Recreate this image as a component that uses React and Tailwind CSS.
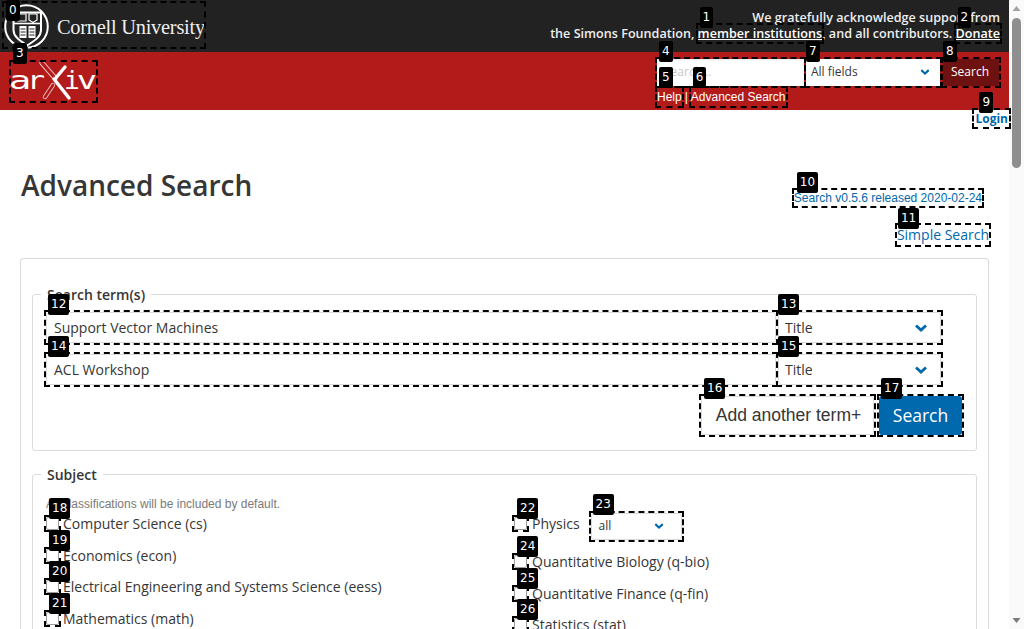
import React from "react";

const open = "font-['Open_Sans',sans-serif]";
const lib = "font-['Liberation_Sans',sans-serif]";
const mark = "outline-2 outline-dashed outline-black";

function Badge({ n, x = 2, y = -18 }) {
  return (
    <span
      className="absolute z-10 h-[21px] px-[3px] rounded-[2px] bg-black text-white text-[12px] leading-[21px] font-['DejaVu_Sans',sans-serif] font-normal no-underline whitespace-nowrap"
      style={{ left: x, top: y }}
    >
      {n}
    </span>
  );
}

function Chevron({ className = "" }) {
  return (
    <svg viewBox="0 0 12 8" className={"w-[12px] h-[8px] " + className} fill="none" stroke="#0068ac" strokeWidth="2.8">
      <path d="M1 1.5 L6 6 L11 1.5" />
    </svg>
  );
}

function CornellLogo() {
  return (
    <div className="flex items-center h-[44px] w-[200px]">
      <svg viewBox="0 0 45 45" className="w-[45px] h-[45px] shrink-0 mt-[2px]" fill="none" stroke="#fff">
        <circle cx="22.5" cy="22.5" r="21.3" strokeWidth="2" />
        <path d="M9.5 8.5 H37 V26 C37 33 30 37 23.2 41.5 C16.5 37 9.5 33 9.5 26 Z" strokeWidth="2" fill="#222" />
        <path d="M14 10 h8 v7 h-8 z M25 10 h8 v6 l-4 2.5 l-4 -2.5 z" strokeWidth="1.2" />
        <path d="M10 19.5 H37" strokeWidth="1.6" />
        <path d="M15.5 22 H22.5 V34 H15.5 Z M24.5 22 H31.5 V34 H24.5 Z" fill="#fff" stroke="none" />
        <path d="M16.5 25 h5 M16.5 28 h5 M16.5 31 h5 M25.5 25 h5 M25.5 28 h5 M25.5 31 h5" stroke="#222" strokeWidth="1" />
      </svg>
      <span className="ml-[8px] mt-[4px] text-[#eeeeee] text-[20.4px] tracking-[-0.25px] font-['Liberation_Serif',serif] whitespace-nowrap">
        Cornell University
      </span>
    </div>
  );
}

function ArxivLetter({ c, left, scale }) {
  return (
    <span
      className="absolute top-[1px] w-[20px] text-center text-white text-[25px] leading-[36px] font-normal font-['DejaVu_Sans_Mono',monospace]"
      style={{ left, transform: `scaleX(${scale})` }}
    >
      {c}
    </span>
  );
}

function ArxivLogo() {
  return (
    <div className="relative w-[85px] h-[39px]">
      <ArxivLetter c="a" left={-1} scale={1.5} />
      <ArxivLetter c="r" left={15} scale={1.2} />
      <ArxivLetter c="i" left={51} scale={1.05} />
      <ArxivLetter c="v" left={66} scale={1.35} />
      <svg viewBox="0 0 85 39" className="absolute left-0 top-0 w-[85px] h-[39px]" fill="none">
        <path d="M31 1 L44 16" stroke="#f4d0d0" strokeWidth="5" strokeLinecap="round" />
        <path d="M31 1 L44 16" stroke="#b31b1b" strokeWidth="3.4" strokeLinecap="round" />
        <path d="M34 35 L42 23" stroke="#f4d0d0" strokeWidth="4.4" strokeLinecap="round" />
        <path d="M34 35 L42 23" stroke="#b31b1b" strokeWidth="2.8" strokeLinecap="round" />
        <path d="M43 17 L58 36" stroke="#fff" strokeWidth="3.4" strokeLinecap="round" />
        <path d="M54 5 L44 17" stroke="#fff" strokeWidth="3.4" strokeLinecap="round" />
      </svg>
    </div>
  );
}

function CheckRow({ n, label, ml = "ml-[4px]", children, h = "h-[31.5px]" }) {
  return (
    <div className={"flex items-center " + h}>
      <span className={"relative block w-[13px] h-[13px] shrink-0 " + mark}>
        <Badge n={n} x={3} y={-19} />
        <span className="block w-full h-full rounded-[2px] bg-white border border-[#9a9a9a]" />
      </span>
      <span className={"text-[14px] text-[#363636] whitespace-nowrap " + ml}>{label}</span>
      {children}
    </div>
  );
}

function TermRow({ n1, n2, text }) {
  return (
    <div className="flex gap-[2px] h-[31px]">
      <div className={"relative w-[730px] h-[31px] " + mark}>
        <Badge n={n1} x={2} y={-18} />
        <div className="w-full h-full flex items-center pl-[7px] bg-white border border-[#dbdbdb] rounded-[3px] text-[14px] text-[#363636]">
          {text}
        </div>
      </div>
      <div className={"relative w-[163px] h-[31px] " + mark}>
        <Badge n={n2} x={0} y={-18} />
        <div className="w-full h-full flex items-center pl-[6px] pr-[13px] justify-between bg-white border border-[#dbdbdb] rounded-[3px] text-[14px] text-[#363636]">
          <span>Title</span>
          <Chevron />
        </div>
      </div>
    </div>
  );
}

export default function App() {
  return (
    <div className={"flex w-full h-[629px] overflow-hidden bg-white text-[#363636] " + open}>
      <div className="w-[1009px] h-[629px] shrink-0 flex flex-col">
        <header className="h-[52px] shrink-0 bg-[#222222] flex justify-between pl-[4px] pr-[9px]">
          <div className={"relative self-start mt-[3px] " + mark}>
            <Badge n={0} x={2} y={-3} />
            <CornellLogo />
          </div>
          <div className="pt-[10px] text-right text-[12.6px] leading-[16px] font-semibold text-[#eeeeee] whitespace-nowrap">
            <div>We gratefully acknowledge support from</div>
            <div>
              the Simons Foundation,{" "}
              <a className={"relative underline text-white " + mark}>
                <Badge n={1} x={2} y={-18} />
                member institutions
              </a>
              , and all contributors.{" "}
              <a className={"relative underline text-white " + mark}>
                <Badge n={2} x={2} y={-18} />
                Donate
              </a>
            </div>
          </div>
        </header>

        <div className="h-[58px] shrink-0 bg-[#b31b1b] flex justify-between pl-[11px] pr-[10px]">
          <div className={"relative self-start mt-[10px] " + mark}>
            <Badge n={3} x={2} y={-19} />
            <ArxivLogo />
          </div>
          <div className="w-[342px] pt-[7px] flex flex-col">
            <div className="flex">
              <div className={"relative w-[147px] h-[27px] flex items-center pl-[7px] pb-[1px] bg-white text-[12px] text-[#c8c8c8] shadow-[inset_0_1px_2px_rgba(10,10,10,0.1)] " + mark}>
                <Badge n={4} x={2} y={-18} />
                Search...
              </div>
              <div className={"relative ml-[2px] w-[134px] h-[27px] flex items-center justify-between pl-[5px] pr-[9px] pb-[1px] bg-white text-[12px] text-[#363636] " + mark}>
                <Badge n={7} x={0} y={-18} />
                <span>All fields</span>
                <Chevron className="scale-75" />
              </div>
              <div className={"relative ml-[3px] w-[56px] h-[27px] " + mark}>
                <Badge n={8} x={0} y={-18} />
                <div className="w-full h-full flex items-center justify-center pb-[1px] pr-[2px] bg-[#6e1111] text-white text-[12px] rounded-[2px]">
                  Search
                </div>
              </div>
            </div>
            <div className={"mt-[2px] flex items-center text-[12px] leading-[18px] text-white " + lib}>
              <a className={"relative " + mark}>
                <Badge n={5} x={2} y={-21} />
                Help
              </a>
              <span className="mx-[3px]">|</span>
              <a className={"relative " + mark}>
                <Badge n={6} x={2} y={-21} />
                Advanced Search
              </a>
            </div>
          </div>
        </div>

        <div className="flex justify-end h-[17px] shrink-0">
          <a className={"relative self-end text-[12px] leading-[17px] font-bold text-[#0068ac] px-[1px] " + mark}>
            <Badge n={9} x={5} y={-18} />
            Login
          </a>
        </div>

        <main className="flex-1 flex flex-col px-[20px] min-h-0">
          <div className="h-[131px] shrink-0 flex justify-between">
            <h1 className="mt-[40px] ml-[1px] text-[28px] leading-[36px] font-semibold text-[#363636]">Advanced Search</h1>
            <div className="flex flex-col items-end mt-[63px]">
              <a className={"relative mr-[7px] text-[12px] leading-[16px] text-[#0068ac] " + lib + " " + mark}>
                <Badge n={10} x={3} y={-18} />
                Search v0.5.6 released 2020-02-24
              </a>
              <a className={"relative mt-[19px] text-[14px] leading-[20px] text-[#0068ac] " + mark}>
                <Badge n={11} x={1} y={-17} />
                Simple Search
              </a>
            </div>
          </div>

          <section className="flex-1 min-h-0 overflow-hidden border border-b-0 border-[#dbdbdb] rounded-t-[4px] px-[11px] pt-[35px]">
            <fieldset className="relative h-[157px] border border-[#dbdbdb] rounded-[3px] px-[13px] pt-[17px]">
              <legend className="absolute left-[8px] top-[-10px] bg-white px-[6px] text-[14px] leading-[20px] font-semibold whitespace-nowrap">
                Search term(s)
              </legend>
              <div className="flex flex-col gap-[11px]">
                <TermRow n1={12} n2={13} text="Support Vector Machines" />
                <TermRow n1={14} n2={15} text="ACL Workshop" />
              </div>
              <div className="flex justify-end mt-[11px] pr-[1px]">
                <div className={"relative w-[173px] h-[39px] " + mark}>
                  <Badge n={16} x={3} y={-18} />
                  <div className={"w-full h-full flex items-center justify-center pl-[2px] bg-white border border-[#dbdbdb] rounded-[3px] text-[17.5px] " + lib}>
                    Add another term+
                  </div>
                </div>
                <div className={"relative ml-[5px] w-[83px] h-[39px] " + mark}>
                  <Badge n={17} x={2} y={-18} />
                  <div className="w-full h-full flex items-center justify-center bg-[#0068ac] rounded-[3px] text-[17.5px] text-white">
                    Search
                  </div>
                </div>
              </div>
            </fieldset>

            <fieldset className="relative mt-[23px] h-[300px] border border-[#dbdbdb] rounded-[3px] px-[13px] pt-[21px]">
              <legend className="absolute left-[8px] top-[-10px] bg-white px-[6px] text-[14px] leading-[20px] font-semibold whitespace-nowrap">
                Subject
              </legend>
              <p className={"text-[12px] leading-[16px] -mb-[4px] text-[#7a7a7a] whitespace-nowrap " + lib}>
                All classifications will be included by default.
              </p>
              <div className="flex">
                <div className="w-[468px] shrink-0">
                  <CheckRow n={18} label="Computer Science (cs)" />
                  <CheckRow n={19} label="Economics (econ)" />
                  <CheckRow n={20} label="Electrical Engineering and Systems Science (eess)" />
                  <CheckRow n={21} label="Mathematics (math)" />
                </div>
                <div className="flex-1">
                  <CheckRow n={22} label="Physics" ml="ml-[5px]" h="h-[38px] pb-[8px]">
                    <div className={"relative ml-[11px] mt-[6px] w-[91px] h-[27px] " + mark}>
                      <Badge n={23} x={2} y={-19} />
                      <div className="w-full h-full flex items-center justify-between pl-[7px] pr-[16px] bg-white border border-[#dbdbdb] rounded-[3px] text-[12px]">
                        <span>all</span>
                        <Chevron className="scale-75" />
                      </div>
                    </div>
                  </CheckRow>
                  <CheckRow n={24} label="Quantitative Biology (q-bio)" ml="ml-[5px]" />
                  <CheckRow n={25} label="Quantitative Finance (q-fin)" ml="ml-[5px]" />
                  <CheckRow n={26} label="Statistics (stat)" ml="ml-[5px]" />
                </div>
              </div>
            </fieldset>
          </section>
        </main>
      </div>

      <div className="w-[15px] h-[629px] shrink-0 bg-[#fafafa] flex flex-col items-center">
        <svg viewBox="0 0 15 17" className="w-[15px] h-[17px] shrink-0" fill="#a3a3a3"><path d="M3.5 11 L7.5 6 L11.5 11 Z" /></svg>
        <div className="w-[9px] h-[150px] mt-[1px] rounded-[5px] bg-[#8f8f8f]" />
        <svg viewBox="0 0 15 17" className="w-[15px] h-[17px] shrink-0 mt-auto" fill="#7a7a7a"><path d="M3.5 6 L7.5 11 L11.5 6 Z" /></svg>
      </div>
    </div>
  );
}
